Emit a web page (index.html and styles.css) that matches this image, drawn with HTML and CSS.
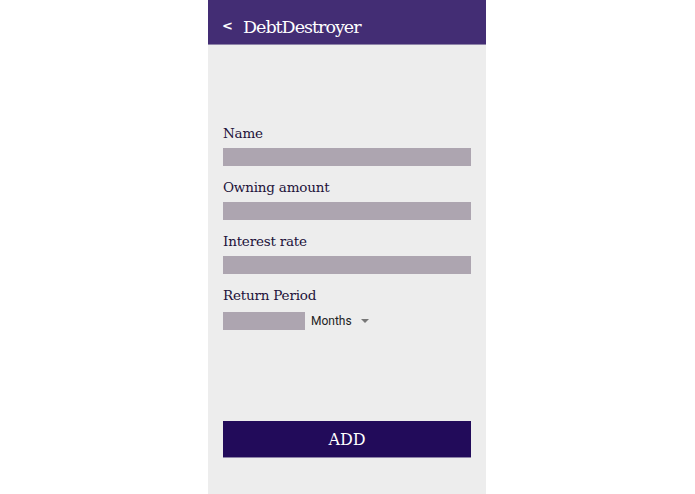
FILE: index.html
```html
<!DOCTYPE html>
<html>
<head>
<meta charset="utf-8">
<link rel="stylesheet" href="styles.css">
</head>
<body>
<div class="phone">
  <header class="bar">
    <span class="back">&lt;</span>
    <span class="title">DebtDestroyer</span>
  </header>
  <main class="form">
    <div class="field">
      <label class="label">Name</label>
      <div class="input"></div>
    </div>
    <div class="field">
      <label class="label">Owning amount</label>
      <div class="input"></div>
    </div>
    <div class="field">
      <label class="label">Interest rate</label>
      <div class="input"></div>
    </div>
    <div class="field">
      <label class="label">Return Period</label>
      <div class="period">
        <div class="input short"></div>
        <span class="select">Months</span>
        <span class="caret"></span>
      </div>
    </div>
    <button class="add">ADD</button>
  </main>
</div>
</body>
</html>
```

FILE: styles.css
```css
html, body {
  margin: 0;
  padding: 0;
  background: #ffffff;
}
.phone {
  width: 278px;
  height: 494px;
  margin-left: 208px;
  background: #ededed;
  display: flex;
  flex-direction: column;
}
.bar {
  height: 45px;
  background: #432d74;
  display: flex;
  align-items: center;
  padding-left: 14px;
  padding-top: 10px;
  box-sizing: border-box;
  border-bottom: 1px solid #8e84a8;
}
.back {
  color: #ffffff;
  font-family: "DejaVu Sans", sans-serif;
  font-weight: bold;
  font-size: 13px;
  width: 21px;
  margin-top: -4px;
}
.title {
  color: #ffffff;
  font-family: "DejaVu Serif", serif;
  font-size: 17.5px;
  letter-spacing: -1px;
}
.form {
  display: flex;
  flex-direction: column;
  padding: 79px 15px 0 15px;
}
.field {
  display: flex;
  flex-direction: column;
  margin-bottom: 12px;
}
.label {
  font-family: "DejaVu Serif", serif;
  font-size: 13.5px;
  letter-spacing: -0.2px;
  color: #22123a;
  line-height: 18px;
  margin-bottom: 6px;
}
.input {
  height: 18px;
  background: #ada5b0;
}
.period {
  display: flex;
  align-items: center;
  margin-top: 2px;
}
.short {
  width: 82px;
}
.select {
  font-family: Roboto, sans-serif;
  font-size: 12px;
  color: #222222;
  margin-left: 6px;
}
.caret {
  width: 0;
  height: 0;
  border-left: 4px solid transparent;
  border-right: 4px solid transparent;
  border-top: 4px solid #777777;
  margin-left: 9px;
}
.add {
  margin-top: 79px;
  height: 37px;
  background: #220b5a;
  border: none;
  border-bottom: 1px solid #8e84a8;
  color: #ffffff;
  font-family: "DejaVu Serif", serif;
  font-size: 16px;
  padding: 0;
}
```
